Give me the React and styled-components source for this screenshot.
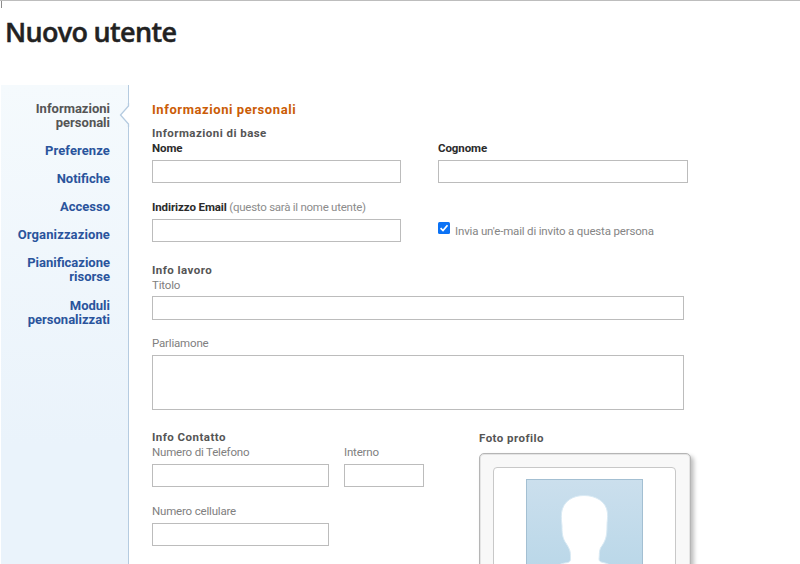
import React from "react";
import styled, { createGlobalStyle } from "styled-components";

const GlobalStyle = createGlobalStyle`
  * { box-sizing: border-box; }
  html, body { margin: 0; height: 564px; overflow: hidden; background: #fff; }
  body { font-family: Roboto, "Open Sans", sans-serif; }
  h1, h2, h3 { margin: 0; }
`;

const Page = styled.div`
  width: 800px;
  height: 564px;
  overflow: hidden;
  border-top: 1px solid #bdbdbd;
  background: #fff;
`;

const Header = styled.header`
  height: 84px;
  padding: 13px 0 0 5px;
  background: linear-gradient(#8c8c8c, #8c8c8c) 1px 0 / 1px 7px no-repeat;
`;

const Title = styled.h1`
  font: 600 27px/36px "Open Sans", sans-serif;
  letter-spacing: -0.68px;
  color: #222;
  -webkit-text-stroke: 0.45px #222;
  white-space: nowrap;
`;

const Body = styled.div`
  display: flex;
  height: 479px;
`;

const Sidebar = styled.nav`
  position: relative;
  flex: none;
  width: 128px;
  margin-left: 1px;
  padding: 16.5px 18px 0 0;
  display: flex;
  flex-direction: column;
  align-items: flex-end;
  gap: 14.2px;
  border-right: 1px solid #b5cbe0;
  background: linear-gradient(#f5fafd, #eaf3fb 75%);
`;

const NavItem = styled.a`
  font-size: 13px;
  line-height: 14px;
  font-weight: 700;
  letter-spacing: ${(p) => p.$spacing || "0"};
  text-align: right;
  white-space: pre-line;
  color: ${(p) => (p.$active ? "#555" : "#2a549c")};
`;

const Notch = styled.svg`
  position: absolute;
  top: 18px;
  right: -2px;
  width: 12px;
  height: 24px;
`;

const Content = styled.main`
  padding: 17px 0 0 23px;
  width: 560px;
`;

const SectionTitle = styled.h2`
  font-size: 13px;
  line-height: 15px;
  font-weight: 700;
  letter-spacing: 0.57px;
  color: #cb5c06;
`;

const GroupTitle = styled.h3`
  margin-top: ${(p) => p.$top || 0}px;
  font-size: 11.5px;
  line-height: 15px;
  font-weight: 700;
  letter-spacing: 0.46px;
  color: #555;
`;

const Row = styled.div`
  display: flex;
  gap: ${(p) => p.$gap}px;
  margin-top: ${(p) => p.$top || 0}px;
`;

const Field = styled.label`
  display: block;
  width: ${(p) => p.$width}px;
  margin-top: ${(p) => p.$top || 0}px;
`;

const Caption = styled.span`
  display: block;
  height: ${(p) => p.$height || 19}px;
  font-size: 11.5px;
  line-height: 15px;
  font-weight: ${(p) => (p.$strong ? 700 : 400)};
  letter-spacing: ${(p) => (p.$strong ? "-0.1px" : "-0.18px")};
  color: ${(p) => (p.$strong ? "#2b2b2b" : "#808080")};
  white-space: nowrap;
`;

const Hint = styled.span`
  font-weight: 400;
  letter-spacing: -0.26px;
  color: #8c8c8c;
`;

const Input = styled.input`
  display: block;
  width: 100%;
  height: ${(p) => p.$height || 23}px;
  border: 1px solid #bcbcbc;
  border-radius: 0;
  outline: 0;
  background: #fff;
`;

const TextArea = styled.textarea`
  display: block;
  width: 100%;
  height: 55px;
  border: 1px solid #bcbcbc;
  outline: 0;
  resize: none;
  background: #fff;
`;

const Invite = styled.label`
  display: flex;
  align-items: flex-start;
  gap: 5px;
  padding-top: 22px;
  font-size: 11.5px;
  line-height: 15px;
  letter-spacing: -0.17px;
  color: #858585;
  white-space: nowrap;
`;

const CheckIcon = styled.svg`
  flex: none;
  width: 12px;
  height: 12px;
`;

const InviteText = styled.span`
  margin-top: 2px;
`;

const Contact = styled.div`
  display: flex;
  width: 560px;
  margin-top: 20px;
`;

const ContactFields = styled.section`
  width: 327px;
  flex: none;
`;

const Photo = styled.section`
  flex: none;
  padding-top: 1px;
`;

const Frame = styled.div`
  width: 212px;
  height: 180px;
  margin-top: 7px;
  padding: 13px 14px 13px 13px;
  border: 1px solid #b5b5b5;
  border-radius: 5px;
  background: #f8f8f8;
  box-shadow: inset 0 0 0 1px #e4e4e4, 3px 3px 4px rgba(0, 0, 0, 0.25);
`;

const Mat = styled.div`
  height: 160px;
  padding: 11px 0 0 32px;
  border: 1px solid #c8c8c8;
  border-radius: 4px;
  background: #fff;
`;

const Avatar = styled.svg`
  display: block;
  width: 117px;
  height: 117px;
`;

const NAV = [
  { text: "Informazioni\npersonali", active: true },
  { text: "Preferenze", spacing: "0.1px" },
  { text: "Notifiche" },
  { text: "Accesso" },
  { text: "Organizzazione", spacing: "0.12px" },
  { text: "Pianificazione\nrisorse" },
  { text: "Moduli\npersonalizzati" },
];

function TextField({ label, hint, strong, width, top, captionHeight, inputHeight }) {
  return (
    <Field $width={width} $top={top}>
      <Caption $strong={strong} $height={captionHeight}>
        {label}
        {hint && <Hint> {hint}</Hint>}
      </Caption>
      <Input type="text" $height={inputHeight} />
    </Field>
  );
}

export default function App() {
  return (
    <>
      <GlobalStyle />
      <Page>
        <Header>
          <Title>Nuovo utente</Title>
        </Header>
        <Body>
          <Sidebar>
            {NAV.map((item) => (
              <NavItem key={item.text} $active={item.active} $spacing={item.spacing}>
                {item.text}
              </NavItem>
            ))}
            <Notch viewBox="0 0 12 24">
              <path d="M10.500 0V3L2.500 12L10.500 21V24H12V0Z" fill="#fff" />
              <path d="M10.500 0V3L2.500 12L10.500 21V24" fill="none" stroke="#b5cbe0" strokeWidth="1.300" />
            </Notch>
          </Sidebar>
          <Content>
            <SectionTitle>Informazioni personali</SectionTitle>
            <GroupTitle $top={9}>Informazioni di base</GroupTitle>
            <Row $gap={37}>
              <TextField label="Nome" strong width={249} />
              <TextField label="Cognome" strong width={250} />
            </Row>
            <Row $gap={37} $top={17}>
              <TextField label="Indirizzo Email" hint="(questo sarà il nome utente)" strong width={249} />
              <Invite>
                <CheckIcon viewBox="0 0 12 12">
                  <rect width="12" height="12" rx="1.500" fill="#0b72f5" />
                  <path d="M2.600 6.200L5 8.600L9.500 3.200" fill="none" stroke="#fff" strokeWidth="1.700" />
                </CheckIcon>
                <InviteText>Invia un'e-mail di invito a questa persona</InviteText>
              </Invite>
            </Row>
            <GroupTitle $top={21}>Info lavoro</GroupTitle>
            <TextField label="Titolo" width={532} captionHeight={18} inputHeight={24} />
            <Field $width={532} $top={16}>
              <Caption>Parliamone</Caption>
              <TextArea />
            </Field>
            <Contact>
              <ContactFields>
                <GroupTitle>Info Contatto</GroupTitle>
                <Row $gap={15}>
                  <TextField label="Numero di Telefono" width={177} />
                  <TextField label="Interno" width={80} />
                </Row>
                <TextField label="Numero cellulare" width={177} top={17} />
              </ContactFields>
              <Photo>
                <GroupTitle>Foto profilo</GroupTitle>
                <Frame>
                  <Mat>
                    <Avatar viewBox="0 0 117 117">
                      <defs>
                        <linearGradient id="sky" x1="0" y1="0" x2="0" y2="1">
                          <stop offset="0" stopColor="#cbdfed" />
                          <stop offset="1" stopColor="#b5d5e7" />
                        </linearGradient>
                      </defs>
                      <rect x="0.500" y="0.500" width="116" height="116" fill="url(#sky)" stroke="#a3bfd2" />
                      <path
                        d="M58 16.500C69 16.500 80.500 22 81.500 34C82 39 81 42 81 47C81 58 79.500 62 74.500 69C73 72 73.500 77 73 80C73 84 78 83 82 85C95 91 103 100 104 116H13C14 100 22 91 35 85C40 83 45 85 44.500 79C44.500 72 44 71 40.500 65C36 59 36 53 36 47C35.500 42 35 39 35.500 34C37 22 47 16.500 58 16.500Z"
                        fill="#fff"
                        stroke="#d9eaf4"
                      />
                    </Avatar>
                  </Mat>
                </Frame>
              </Photo>
            </Contact>
          </Content>
        </Body>
      </Page>
    </>
  );
}
